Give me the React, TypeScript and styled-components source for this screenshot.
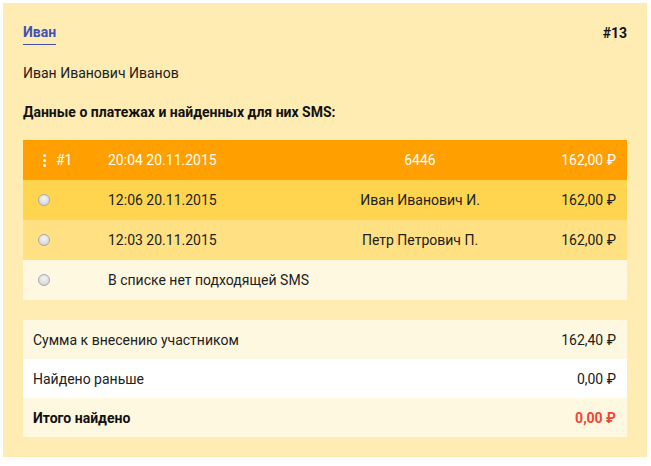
import React from "react";
import styled, { createGlobalStyle } from "styled-components";

const Global = createGlobalStyle`
  html, body { margin: 0; padding: 0; background: #fff; }
  body { font-family: Roboto, "Noto Sans", Arial, sans-serif; font-size: 14px; color: #212121; }
  #root { padding: 3px; }
`;

const Card = styled.div`
  width: 644px;
  box-sizing: border-box;
  background: #ffecb3;
  padding: 20px;
`;

const TopLine = styled.div`
  display: flex;
  justify-content: space-between;
  align-items: center;
  height: 20px;
  line-height: 20px;
`;

const UserLink = styled.a`
  color: #3f51b5;
  font-weight: 700;
  text-decoration: none;
  border-bottom: 1px solid #3f51b5;
  padding-bottom: 2px;
`;

const Number = styled.span`
  font-weight: 700;
  color: #111;
`;

const FullName = styled.div`
  margin-top: 20px;
  line-height: 20px;
`;

const Heading = styled.div`
  margin-top: 19px;
  line-height: 20px;
  font-weight: 700;
  color: #111;
`;

const Table = styled.div`
  margin-top: 18px;
  display: flex;
  flex-direction: column;
`;

const Row = styled.div<{ $bg: string; $light?: boolean }>`
  display: grid;
  grid-template-columns: 70px 206px 212px 1fr;
  align-items: center;
  height: 40px;
  padding: 0 11px 0 15px;
  background: ${(p) => p.$bg};
  color: ${(p) => (p.$light ? "#fff" : "#212121")};
`;

const First = styled.div`
  display: flex;
  align-items: center;
  gap: 6px;
`;

const Cell = styled.div<{ $align?: string; $span?: number }>`
  text-align: ${(p) => p.$align || "left"};
  white-space: nowrap;
  ${(p) => (p.$span ? `grid-column: span ${p.$span};` : "")}
`;

const Radio = styled.span`
  display: inline-block;
  width: 12px;
  height: 12px;
  box-sizing: border-box;
  border-radius: 50%;
  border: 1px solid #a9a9a9;
  background: radial-gradient(circle at 50% 35%, #f4f4f4 0%, #dedede 60%, #c8c8c8 100%);
`;

const Dots = styled.span`
  display: inline-flex;
  flex-direction: column;
  align-items: center;
  justify-content: center;
  gap: 2px;
  width: 12px;
  & > i {
    display: block;
    width: 3px;
    height: 3px;
    border-radius: 50%;
    background: #fff;
  }
`;

const Summary = styled.div`
  margin-top: 20px;
  display: flex;
  flex-direction: column;
`;

const SumRow = styled.div<{ $bg: string; $bold?: boolean }>`
  display: flex;
  justify-content: space-between;
  align-items: center;
  height: 39px;
  padding: 0 11px 0 10px;
  background: ${(p) => p.$bg};
  font-weight: ${(p) => (p.$bold ? 700 : 400)};
  color: ${(p) => (p.$bold ? "#111" : "#212121")};
`;

const Red = styled.span`
  color: #f44336;
  font-weight: 700;
`;

const rows = [
  { bg: "#ffd54f", date: "12:06 20.11.2015", name: "Иван Иванович И.", sum: "162,00 ₽" },
  { bg: "#ffe082", date: "12:03 20.11.2015", name: "Петр Петрович П.", sum: "162,00 ₽" },
];

export default function App() {
  return (
    <>
      <Global />
      <Card>
        <TopLine>
          <UserLink href="#">Иван</UserLink>
          <Number>#13</Number>
        </TopLine>
        <FullName>Иван Иванович Иванов</FullName>
        <Heading>Данные о платежах и найденных для них SMS:</Heading>
        <Table>
          <Row $bg="#ffa000" $light>
            <First>
              <Dots>
                <i />
                <i />
                <i />
              </Dots>
              <span>#1</span>
            </First>
            <Cell>20:04 20.11.2015</Cell>
            <Cell $align="center">6446</Cell>
            <Cell $align="right">162,00 ₽</Cell>
          </Row>
          {rows.map((r) => (
            <Row key={r.date} $bg={r.bg}>
              <First>
                <Radio />
              </First>
              <Cell>{r.date}</Cell>
              <Cell $align="center">{r.name}</Cell>
              <Cell $align="right">{r.sum}</Cell>
            </Row>
          ))}
          <Row $bg="#fff8e1">
            <First>
              <Radio />
            </First>
            <Cell $span={3}>В списке нет подходящей SMS</Cell>
          </Row>
        </Table>
        <Summary>
          <SumRow $bg="#fff8e1">
            <span>Сумма к внесению участником</span>
            <span>162,40 ₽</span>
          </SumRow>
          <SumRow $bg="#ffffff">
            <span>Найдено раньше</span>
            <span>0,00 ₽</span>
          </SumRow>
          <SumRow $bg="#fff8e1" $bold>
            <span>Итого найдено</span>
            <Red>0,00 ₽</Red>
          </SumRow>
        </Summary>
      </Card>
    </>
  );
}
